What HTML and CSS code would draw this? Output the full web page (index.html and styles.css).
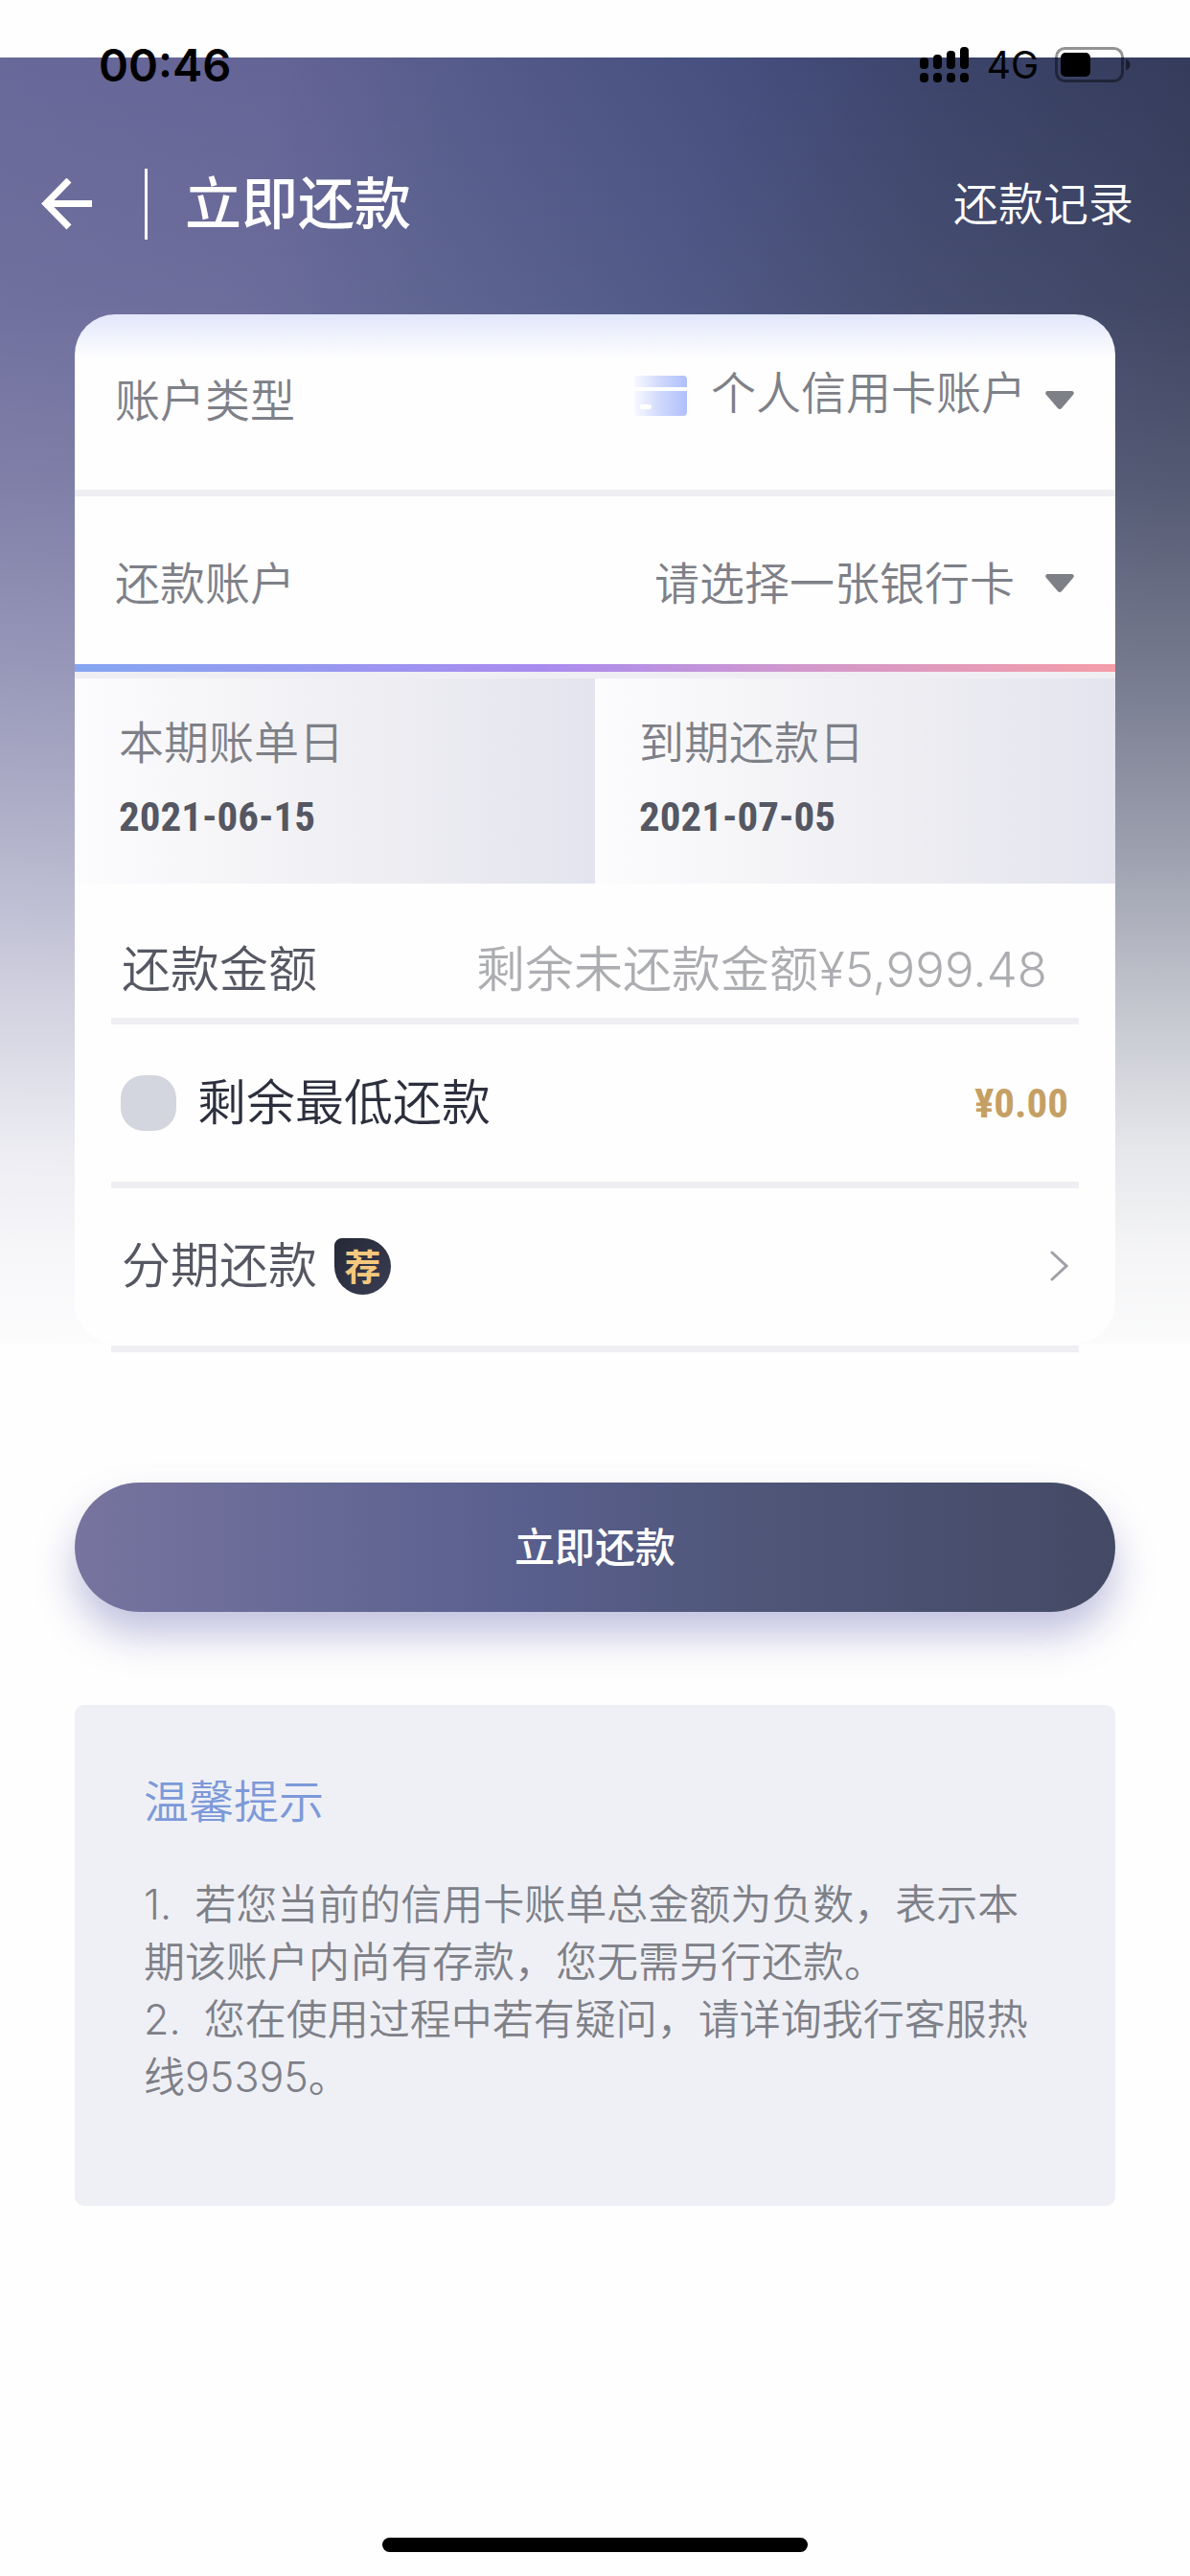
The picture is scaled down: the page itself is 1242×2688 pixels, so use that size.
FILE: index.html
```html
<!DOCTYPE html>
<html lang="zh-CN">
<head>
    <meta charset="UTF-8">
    <meta name="viewport" content="width=device-width, initial-scale=1.0">
    <title>立即还款</title>
    <link rel="stylesheet" href="styles.css">
</head>
<body>
    <div class="page">
        <div class="status-bar">
            <span class="time">00:46</span>
            <div class="status-icons">
                <svg class="signal" width="51" height="38" viewBox="0 0 51 38">
                    <rect x="0" y="11" width="9" height="12" rx="4"/>
                    <rect x="14" y="8" width="9" height="15" rx="4"/>
                    <rect x="28" y="4" width="9" height="19" rx="4"/>
                    <rect x="42" y="0" width="9" height="23" rx="4"/>
                    <rect x="0" y="27" width="9" height="10" rx="4"/>
                    <rect x="14" y="27" width="9" height="10" rx="4"/>
                    <rect x="28" y="27" width="9" height="10" rx="4"/>
                    <rect x="42" y="27" width="9" height="10" rx="4"/>
                </svg>
                <span class="network">4G</span>
                <svg width="80" height="38" viewBox="0 0 80 38">
                    <rect x="1.5" y="1.5" width="69" height="34" rx="9" fill="none" stroke="#000" stroke-opacity="0.42" stroke-width="3"/>
                    <rect x="6" y="6" width="31" height="25" rx="5"/>
                    <path d="M74 12.500c3 1 4.500 3 4.500 6s-1.500 5-4.500 6z" opacity="0.5"/>
                </svg>
            </div>
        </div>

        <header class="header">
            <a class="back" href="#" aria-label="返回">
                <svg width="54" height="54" viewBox="0 0 54 54" fill="none" stroke="#fff" stroke-width="7">
                    <path d="M53 26.500H5M29 2L5 26.500 29 51"/>
                </svg>
            </a>
            <h1>立即还款</h1>
            <a class="record" href="#">还款记录</a>
        </header>

        <main>
            <form>
                <div class="card">
                    <div class="row row-type">
                        <label for="type">账户类型</label>
                        <div class="picker">
                            <svg class="card-icon" width="56" height="44" viewBox="0 0 56 44">
                                <defs>
                                    <linearGradient id="cardFill" x1="0" x2="1" y1="0" y2="0">
                                        <stop offset="0" stop-color="#f8f9ff"/>
                                        <stop offset="0.5" stop-color="#cfd8fc"/>
                                        <stop offset="1" stop-color="#afbffb"/>
                                    </linearGradient>
                                </defs>
                                <path d="M4 1h47q4 0 4 4v8H0V5q0-4 4-4zM0 17h55v22q0 4-4 4H4q-4 0-4-4z" fill="url(#cardFill)"/>
                                <rect x="6" y="31" width="12" height="5" rx="2" fill="#fff"/>
                            </svg>
                            <select id="type">
                                <option>个人信用卡账户</option>
                            </select>
                            <svg width="30" height="20" viewBox="0 0 30 20" fill="#7e8088"><path d="M2 0h26q3 1 1 4L17 18q-2 2-4 0L1 4Q-1 1 2 0z"/></svg>
                        </div>
                    </div>
                    <div class="row row-account">
                        <label for="account">还款账户</label>
                        <div class="picker">
                            <select id="account">
                                <option>请选择一张银行卡</option>
                            </select>
                            <svg width="30" height="20" viewBox="0 0 30 20" fill="#7e8088"><path d="M2 0h26q3 1 1 4L17 18q-2 2-4 0L1 4Q-1 1 2 0z"/></svg>
                        </div>
                    </div>
                    <div class="rainbow"></div>
                    <dl class="dates">
                        <div class="date">
                            <dt>本期账单日</dt>
                            <dd>2021-06-15</dd>
                        </div>
                        <div class="date">
                            <dt>到期还款日</dt>
                            <dd>2021-07-05</dd>
                        </div>
                    </dl>
                    <div class="line-row row-amount">
                        <label for="amount">还款金额</label>
                        <input type="text" id="amount" placeholder="剩余未还款金额¥5,999.48">
                    </div>
                    <div class="line-row row-min">
                        <input type="checkbox" id="min">
                        <label for="min">剩余最低还款</label>
                        <span class="money">¥0.00</span>
                    </div>
                    <a class="line-row row-stage" href="#">
                        <span>分期还款</span>
                        <span class="badge">荐</span>
                        <svg class="chevron" width="20" height="32" viewBox="0 0 20 32" fill="none" stroke="#a0a1a7" stroke-width="3" stroke-linecap="round"><path d="M3 2l15 14L3 30"/></svg>
                    </a>
                </div>
                <hr class="card-line">
                <button type="submit" class="submit">立即还款</button>
            </form>

            <section class="tips">
                <h2>温馨提示</h2>
                <p>1.&nbsp; 若您当前的信用卡账单总金额为负数，表示本期该账户内尚有存款，您无需另行还款。</p>
                <p>2.&nbsp; 您在使用过程中若有疑问，请详询我行客服热线95395。</p>
            </section>
        </main>
        <div class="home-bar"></div>
    </div>
</body>
</html>
```
FILE: styles.css
```css
* {
    box-sizing: border-box;
}

body {
    margin: 0;
    background-color: #fefefe;
    font-family: Inter, "Noto Sans CJK SC", sans-serif;
    font-size: 47px;
    font-weight: 350;
    line-height: 60px;
    color: #7e8088;
}

h1, h2, p, dl, dd {
    margin: 0;
    font-weight: inherit;
}

a {
    color: inherit;
    text-decoration: none;
}

svg {
    display: block;
    flex: none;
}

input, select, button {
    margin: 0;
    padding: 0;
    border: 0;
    background: none;
    appearance: none;
    font: inherit;
    color: inherit;
}

.page {
    display: flex;
    flex-direction: column;
    min-height: 100vh;
    background-image:
        linear-gradient(to bottom, rgba(255, 255, 255, 0) 0%, rgba(255, 255, 255, 0.06) 19%, rgba(255, 255, 255, 0.16) 33%, rgba(255, 255, 255, 0.33) 48%, rgba(255, 255, 255, 0.52) 62%, rgba(255, 255, 255, 0.73) 75%, rgba(255, 255, 255, 0.88) 85%, rgba(255, 255, 255, 0.95) 93%, rgba(255, 255, 255, 0.98) 100%),
        linear-gradient(100deg, #686899 0%, #646496 20%, #565c8b 32%, #475080 50%, #3b4369 68%, #333a58 88%, #333a58 100%);
    background-repeat: no-repeat;
    background-position: 0 60px;
    background-size: 100% 1342px;
}

/* status bar */
.status-bar {
    display: flex;
    align-items: center;
    justify-content: space-between;
    height: 136px;
    padding: 0 61px 0 103px;
    color: #000;
}

.time {
    font-size: 47px;
    font-weight: 600;
}

.status-icons {
    display: flex;
    align-items: center;
}

.network {
    margin: 0 17px 0 19px;
    font-size: 39px;
    font-weight: 400;
}

/* header */
.header {
    display: flex;
    align-items: center;
    height: 154px;
    padding: 0 59px 0 43px;
    margin-bottom: 38px;
    color: #fff;
}

.back {
    padding: 10px 54px 10px 0;
    border-right: 3px solid #fff;
}

.header h1 {
    margin-left: 39px;
    font-size: 59px;
    font-weight: 500;
}

.record {
    margin-left: auto;
}

main {
    padding: 0 78px;
}

/* card */
.card {
    overflow: hidden;
    border-radius: 42px;
    background: #fefefe linear-gradient(to bottom, #e2e6fb, #fefefe) no-repeat;
    background-size: 100% 46px;
}

.row {
    display: flex;
    align-items: center;
    justify-content: space-between;
    padding: 0 43px 0 42px;
}

.row-type {
    height: 190px;
    padding-bottom: 4px;
    border-bottom: 7px solid #efeff3;
}

.row-account {
    height: 175px;
    padding-top: 6px;
}

.picker {
    display: flex;
    align-items: center;
}

.picker select {
    padding-right: 20px;
}

.row-account select {
    padding-right: 32px;
}

.row-type select {
    padding-bottom: 16px;
}

.card-icon {
    margin: 0 24px 10px 0;
}

.rainbow {
    height: 8px;
    background: linear-gradient(to right, #85a6f2, #a98bf0 45%, #d298cc 70%, #f49da8);
}

.dates {
    display: flex;
    border-top: 7px solid #efeff3;
}

.date {
    flex: 1;
    height: 214px;
    padding: 37px 0 0 46px;
    background: linear-gradient(to right, #fcfcfe, #efeff3 55%, #e3e4ee);
}

.date dd,
.money {
    font-family: "Roboto Condensed", Roboto, "Noto Sans CJK SC", sans-serif;
    font-size: 43px;
    font-weight: 700;
}

.date dd {
    margin-top: 17px;
    color: #555762;
}

.line-row {
    display: flex;
    align-items: center;
    margin: 0 38px;
    padding: 0 11px;
    border-bottom: 7px solid #efeff3;
    font-size: 51px;
    color: #555762;
}

.row-amount {
    height: 147px;
    padding-top: 40px;
}

.row-amount input {
    flex: 1;
    min-width: 0;
    padding-right: 22px;
    text-align: right;
}

.row-amount input::placeholder {
    color: #acadb0;
    opacity: 1;
}

.row-min {
    height: 171px;
    padding-left: 10px;
    color: #2c2f3d;
}

.row-min input {
    width: 58px;
    height: 58px;
    margin-right: 22px;
    border-radius: 24px;
    background-color: #d3d5df;
}

.row-min input:checked {
    background-color: #5a608e;
}

.money {
    margin-left: auto;
    color: #c5a064;
}

.row-stage {
    height: 162px;
    border-bottom: 0;
}

.badge {
    width: 59px;
    height: 59px;
    margin-left: 18px;
    border-radius: 8px 30px 30px 30px;
    background: linear-gradient(135deg, #252835, #3a3e54);
    font-size: 38px;
    font-weight: 700;
    text-align: center;
    color: #f6c87e;
}

.chevron {
    margin-left: auto;
}

.card-line {
    height: 7px;
    margin: 2px 38px 0;
    border: 0;
    background-color: #efeff3;
}

.submit {
    display: block;
    width: 100%;
    height: 135px;
    margin-top: 136px;
    border-radius: 68px;
    background: linear-gradient(to right, #77749f, #5a608e 42%, #4f5679 65%, #444a65);
    box-shadow: 0 24px 40px rgba(112, 112, 184, 0.42);
    font-size: 42px;
    font-weight: 500;
    color: #fff;
    cursor: pointer;
}

.tips {
    margin-top: 97px;
    padding: 71px 75px 105px 72px;
    border-radius: 10px;
    background-color: #eff0f5;
    font-size: 43px;
}

.tips h2 {
    margin-bottom: 47px;
    font-size: 47px;
    color: #7c99d9;
}

.home-bar {
    width: 444px;
    height: 15px;
    margin: auto auto 25px;
    border-radius: 8px;
    background-color: #000;
}
```
